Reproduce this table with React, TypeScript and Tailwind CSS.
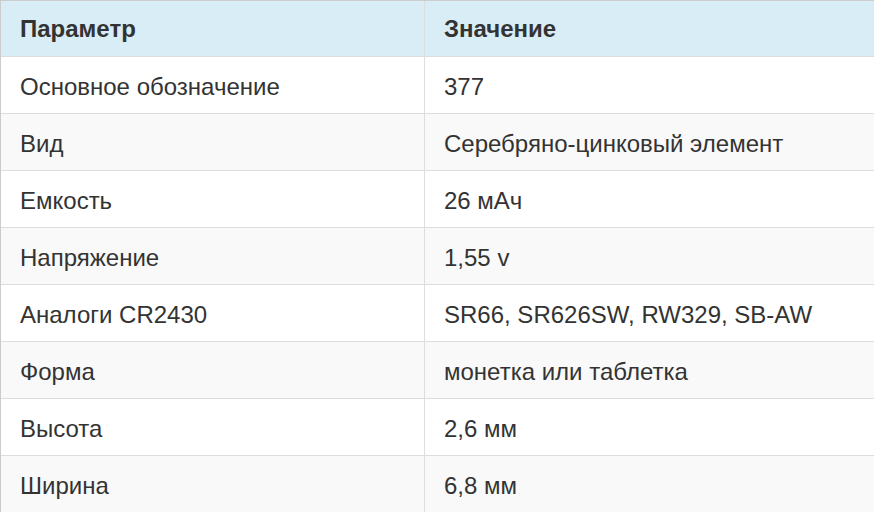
const rows: [string, string][] = [
  ["Основное обозначение", "377"],
  ["Вид", "Серебряно-цинковый элемент"],
  ["Емкость", "26 мАч"],
  ["Напряжение", "1,55 v"],
  ["Аналоги CR2430", "SR66, SR626SW, RW329, SB-AW"],
  ["Форма", "монетка или таблетка"],
  ["Высота", "2,6 мм"],
  ["Ширина", "6,8 мм"],
];

export default function App() {
  return (
    <div className="w-[874px] h-[512px] overflow-hidden bg-white font-['Liberation_Sans',Arial,sans-serif] text-[24px] text-[#333]">
      <div className="border-l border-t border-[#ccc]">
        <div className="grid grid-cols-[424px_1fr] h-[56px] bg-[#d9edf7] font-bold border-b border-[#ddd]">
          <div className="flex items-center pl-[19px] border-r border-[#ddd]">Параметр</div>
          <div className="flex items-center pl-[19px]">Значение</div>
        </div>
        {rows.map(([k, v], i) => (
          <div
            key={k}
            className={`grid grid-cols-[424px_1fr] h-[57px] border-b border-[#ddd] ${
              i % 2 === 1 ? "bg-[#f9f9f9]" : "bg-white"
            }`}
          >
            <div className="flex items-center pl-[19px] pt-[3px] border-r border-[#ddd]">{k}</div>
            <div className="flex items-center pl-[19px] pt-[3px]">{v}</div>
          </div>
        ))}
      </div>
    </div>
  );
}
